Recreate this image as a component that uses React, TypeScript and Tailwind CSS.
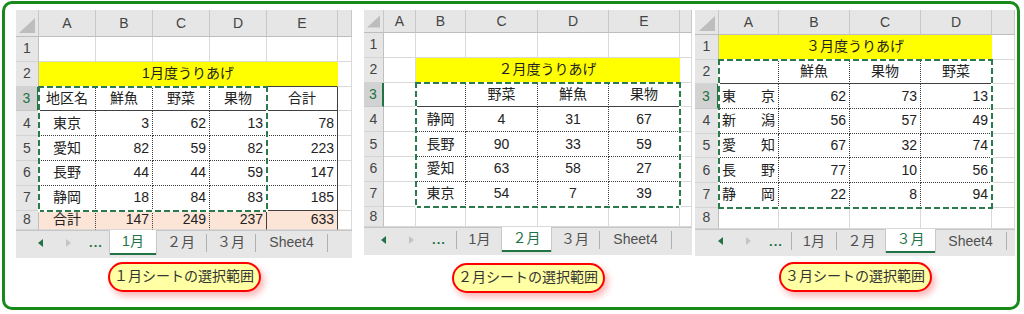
import { Fragment } from "react";

type B = "g" | "dot" | "solid" | "none";
type C = { t?: string; a?: "c" | "r" | "j"; r?: B; b?: B; bg?: string; span?: string };

const RIGHT: Record<B, string> = {
  g: "border-r-[#d9d9d9]",
  dot: "border-r-[#404040] [border-right-style:dotted]",
  solid: "border-r-[#404040]",
  none: "border-r-transparent",
};
const BOTTOM: Record<B, string> = {
  g: "border-b-[#d9d9d9]",
  dot: "border-b-[#404040] [border-bottom-style:dotted]",
  solid: "border-b-[#404040]",
  none: "border-b-transparent",
};

const Y = "bg-[#ffff00]";
const P = "bg-[#fce4d6]";
const blank = (n: number): C[] => Array.from({ length: n }, () => ({}));

// 1月: A3:E8, numbers right aligned
const row1 = (name: string, v: number[], b: B = "dot", bg?: string): C[] => [
  { t: name, a: "c", r: "dot", b, bg },
  { t: String(v[0]), a: "r", r: "dot", b, bg },
  { t: String(v[1]), a: "r", r: "dot", b, bg },
  { t: String(v[2]), a: "r", r: "solid", b, bg },
  { t: String(v[3]), a: "r", r: "solid", b, bg },
  {},
];

const sheet1: C[][] = [
  blank(6),
  [{ t: "1月度うりあげ", a: "c", span: "col-span-5", bg: Y, r: "none", b: "solid" }, {}],
  [
    { t: "地区名", a: "c", r: "dot", b: "solid" },
    { t: "鮮魚", a: "c", r: "dot", b: "solid" },
    { t: "野菜", a: "c", r: "dot", b: "solid" },
    { t: "果物", a: "c", r: "solid", b: "solid" },
    { t: "合計", a: "c", r: "solid", b: "solid" },
    {},
  ],
  row1("東京", [3, 62, 13, 78]),
  row1("愛知", [82, 59, 82, 223]),
  row1("長野", [44, 44, 59, 147]),
  row1("静岡", [18, 84, 83, 185], "solid"),
  row1("合計", [147, 249, 237, 633], "g", P),
];

// 2月: B3:E7, all centered
const row2 = (name: string, v: number[], b: B = "dot"): C[] => [
  {},
  { t: name, a: "c", r: "dot", b },
  { t: String(v[0]), a: "c", r: "dot", b },
  { t: String(v[1]), a: "c", r: "dot", b },
  { t: String(v[2]), a: "c", r: "solid", b },
  {},
];

const sheet2: C[][] = [
  blank(6),
  [{}, { t: "２月度うりあげ", a: "c", span: "col-span-4", bg: Y, r: "none", b: "solid" }, {}],
  [
    {},
    { r: "dot", b: "solid" },
    { t: "野菜", a: "c", r: "dot", b: "solid" },
    { t: "鮮魚", a: "c", r: "dot", b: "solid" },
    { t: "果物", a: "c", r: "solid", b: "solid" },
    {},
  ],
  row2("静岡", [4, 31, 67]),
  row2("長野", [90, 33, 59]),
  row2("愛知", [63, 58, 27]),
  row2("東京", [54, 7, 39], "solid"),
  blank(6),
];

// 3月: A2:D7, names distributed
const row3 = (name: string, v: number[], b: B = "dot"): C[] => [
  { t: name, a: "j", r: "dot", b },
  { t: String(v[0]), a: "r", r: "dot", b },
  { t: String(v[1]), a: "r", r: "dot", b },
  { t: String(v[2]), a: "r", r: "solid", b },
  {},
];

const sheet3: C[][] = [
  [{ t: "３月度うりあげ", a: "c", span: "col-span-4", bg: Y, r: "none", b: "solid" }, {}],
  [
    { r: "dot", b: "solid" },
    { t: "鮮魚", a: "c", r: "dot", b: "solid" },
    { t: "果物", a: "c", r: "dot", b: "solid" },
    { t: "野菜", a: "c", r: "solid", b: "solid" },
    {},
  ],
  row3("東京", [62, 73, 13]),
  row3("新潟", [56, 57, 49]),
  row3("愛知", [67, 32, 74]),
  row3("長野", [77, 10, 56]),
  row3("静岡", [22, 8, 94], "solid"),
  blank(5),
];

function Cell({ c }: { c: C }) {
  const align =
    c.a === "r" ? "justify-end pr-[3px]" : c.a === "j" ? "justify-between px-[3px]" : "justify-center";
  return (
    <div
      className={[
        "flex items-center border-r border-b overflow-hidden whitespace-nowrap",
        RIGHT[c.r ?? "g"],
        BOTTOM[c.b ?? "g"],
        align,
        c.bg ?? "bg-white",
        c.span ?? "",
      ].join(" ")}
    >
      {c.a === "j" && c.t ? c.t.split("").map((ch, i) => <span key={i}>{ch}</span>) : c.t}
    </div>
  );
}

function Marquee({ area }: { area: string }) {
  return (
    <div className={`absolute -inset-px pointer-events-none ${area}`}>
      <div className="absolute top-0 inset-x-0 h-[2px] bg-[repeating-linear-gradient(90deg,#2a7a4b_0_6px,#fff_6px_9px)]" />
      <div className="absolute bottom-0 inset-x-0 h-[2px] bg-[repeating-linear-gradient(90deg,#2a7a4b_0_6px,#fff_6px_9px)]" />
      <div className="absolute left-0 inset-y-0 w-[2px] bg-[repeating-linear-gradient(180deg,#2a7a4b_0_6px,#fff_6px_9px)]" />
      <div className="absolute right-0 inset-y-0 w-[2px] bg-[repeating-linear-gradient(180deg,#2a7a4b_0_6px,#fff_6px_9px)]" />
    </div>
  );
}

const Sep = () => <div className="w-px h-[18px] self-center bg-[#b0b0b0]" />;

function TabBar({ bar, nav, tabs, tab }: { bar: string; nav: string; tabs: { t: string; w: string }[]; tab: number }) {
  const items: JSX.Element[] = [];
  tabs.forEach((tb, i) => {
    if (i !== tab && i - 1 !== tab) items.push(<Sep key={"s" + i} />);
    items.push(
      <div
        key={tb.t}
        className={
          i === tab
            ? `${tb.w} -mt-px flex items-center justify-center bg-white text-[#217346] border-b-2 border-b-[#217346] shadow-[1px_0_0_#c8c8c8,-1px_0_0_#c8c8c8]`
            : `${tb.w} flex items-center justify-center text-[#505050]`
        }
      >
        {tb.t}
      </div>
    );
  });
  if (tab !== tabs.length - 1) items.push(<Sep key="end" />);

  return (
    <div className={`flex ${bar} bg-[#e6e6e6] border-t border-t-[#c6c6c6] pb-[3px] text-[14px]`}>
      <div className={`flex items-center ${nav}`}>
        <div className="w-[28px] flex justify-center">
          <svg width="5" height="8" viewBox="0 0 5 8">
            <polygon points="5,0 5,8 0,4" fill="#217346" />
          </svg>
        </div>
        <div className="w-[28px] flex justify-center">
          <svg width="5" height="8" viewBox="0 0 5 8">
            <polygon points="0,0 0,8 5,4" fill="#c4c4c4" />
          </svg>
        </div>
        <div className="w-[28px] flex justify-center text-[13px] font-bold text-[#217346] tracking-[1px]">...</div>
      </div>
      {items}
    </div>
  );
}

function Sheet(props: {
  grid: string;
  heads: string[];
  data: C[][];
  area: string;
  bar: string;
  nav: string;
  tab: number;
  tabWidths: string[];
}) {
  const { grid, heads, data, area, bar, nav, tab, tabWidths } = props;
  const tabs = ["1月", "２月", "３月", "Sheet4"].map((t, i) => ({ t, w: tabWidths[i] }));
  return (
    <div className="flex flex-col w-full">
      <div className={`relative grid ${grid} text-[14px] text-[#222]`}>
        <div className="bg-[#e6e6e6] border-r border-b border-r-[#c8c8c8] border-b-[#bdbdbd] flex items-end justify-end p-[3px]">
          <svg width="16" height="15" viewBox="0 0 16 15">
            <polygon points="16,0 16,15 0,15" fill="#bdbdbd" />
          </svg>
        </div>
        {heads.map((h, i) => (
          <div
            key={i}
            className="bg-[#e6e6e6] border-r border-b border-r-[#c8c8c8] border-b-[#bdbdbd] flex items-center justify-center text-[#444]"
          >
            {h}
          </div>
        ))}
        {data.map((row, ri) => (
          <Fragment key={ri}>
            <div
              className={
                ri === 2
                  ? "bg-[#d2d2d2] border-b border-b-[#c8c8c8] border-r-2 border-r-[#217346] flex items-center justify-center text-[#217346]"
                  : "bg-[#e6e6e6] border-b border-b-[#d4d4d4] border-r border-r-[#c0c0c0] flex items-center justify-center text-[#444]"
              }
            >
              {ri + 1}
            </div>
            {row.map((c, ci) => (
              <Cell key={ci} c={c} />
            ))}
          </Fragment>
        ))}
        <Marquee area={area} />
      </div>
      <TabBar bar={bar} nav={nav} tabs={tabs} tab={tab} />
    </div>
  );
}

function Label({ text, mt }: { text: string; mt: string }) {
  return (
    <div
      className={`${mt} h-[30px] w-[153px] rounded-full border-2 border-[#ff0000] bg-[#ffffa3] shadow-[3px_4px_7px_rgba(240,0,0,0.3)] flex items-center justify-center text-[14px] text-[#333]`}
    >
      {text}
    </div>
  );
}

export default function App() {
  return (
    <div className="w-[1024px] h-[314px] bg-white pl-[2px] pt-px font-['Liberation_Sans','Noto_Sans_CJK_JP',sans-serif]">
      <div className="w-[1018px] h-[309px] border-[3px] border-[#178a17] rounded-[10px] flex items-start pl-[11px] pt-[6px]">
        <div className="w-[336px] flex flex-col items-center">
          <Sheet
            grid="grid-cols-[23px_57px_57px_57px_57px_71px_14px] grid-rows-[27px_repeat(7,24.8px)_19px]"
            heads={["A", "B", "C", "D", "E", ""]}
            data={sheet1}
            area="col-start-2 col-end-6 row-start-4 row-end-9"
            bar="h-[28px]"
            nav="w-[94px] pl-[10px]"
            tab={0}
            tabWidths={["w-[46px]", "w-[50px]", "w-[48px]", "w-[71px]"]}
          />
          <Label text="１月シートの選択範囲" mt="mt-[4px]" />
        </div>

        <div className="w-[328px] ml-[12px] flex flex-col items-center">
          <Sheet
            grid="grid-cols-[20px_32px_50px_72px_71px_71px_12px] grid-rows-[23px_repeat(7,24.8px)_20px]"
            heads={["A", "B", "C", "D", "E", ""]}
            data={sheet2}
            area="col-start-3 col-end-7 row-start-4 row-end-9"
            bar="h-[28px]"
            nav="w-[92px] pl-[5px]"
            tab={1}
            tabWidths={["w-[45px]", "w-[49px]", "w-[48px]", "w-[71px]"]}
          />
          <Label text="２月シートの選択範囲" mt="mt-[8px]" />
        </div>

        <div className="w-[320px] ml-[3px] flex flex-col items-center">
          <Sheet
            grid="grid-cols-[24px_60px_71px_71px_71px_23px] grid-rows-[25px_repeat(7,24.7px)_21px]"
            heads={["A", "B", "C", "D", ""]}
            data={sheet3}
            area="col-start-2 col-end-6 row-start-3 row-end-9"
            bar="h-[27px]"
            nav="w-[96px] pl-[11px]"
            tab={2}
            tabWidths={["w-[44px]", "w-[49px]", "w-[49px]", "w-[71px]"]}
          />
          <Label text="３月シートの選択範囲" mt="mt-[6px]" />
        </div>
      </div>
    </div>
  );
}
